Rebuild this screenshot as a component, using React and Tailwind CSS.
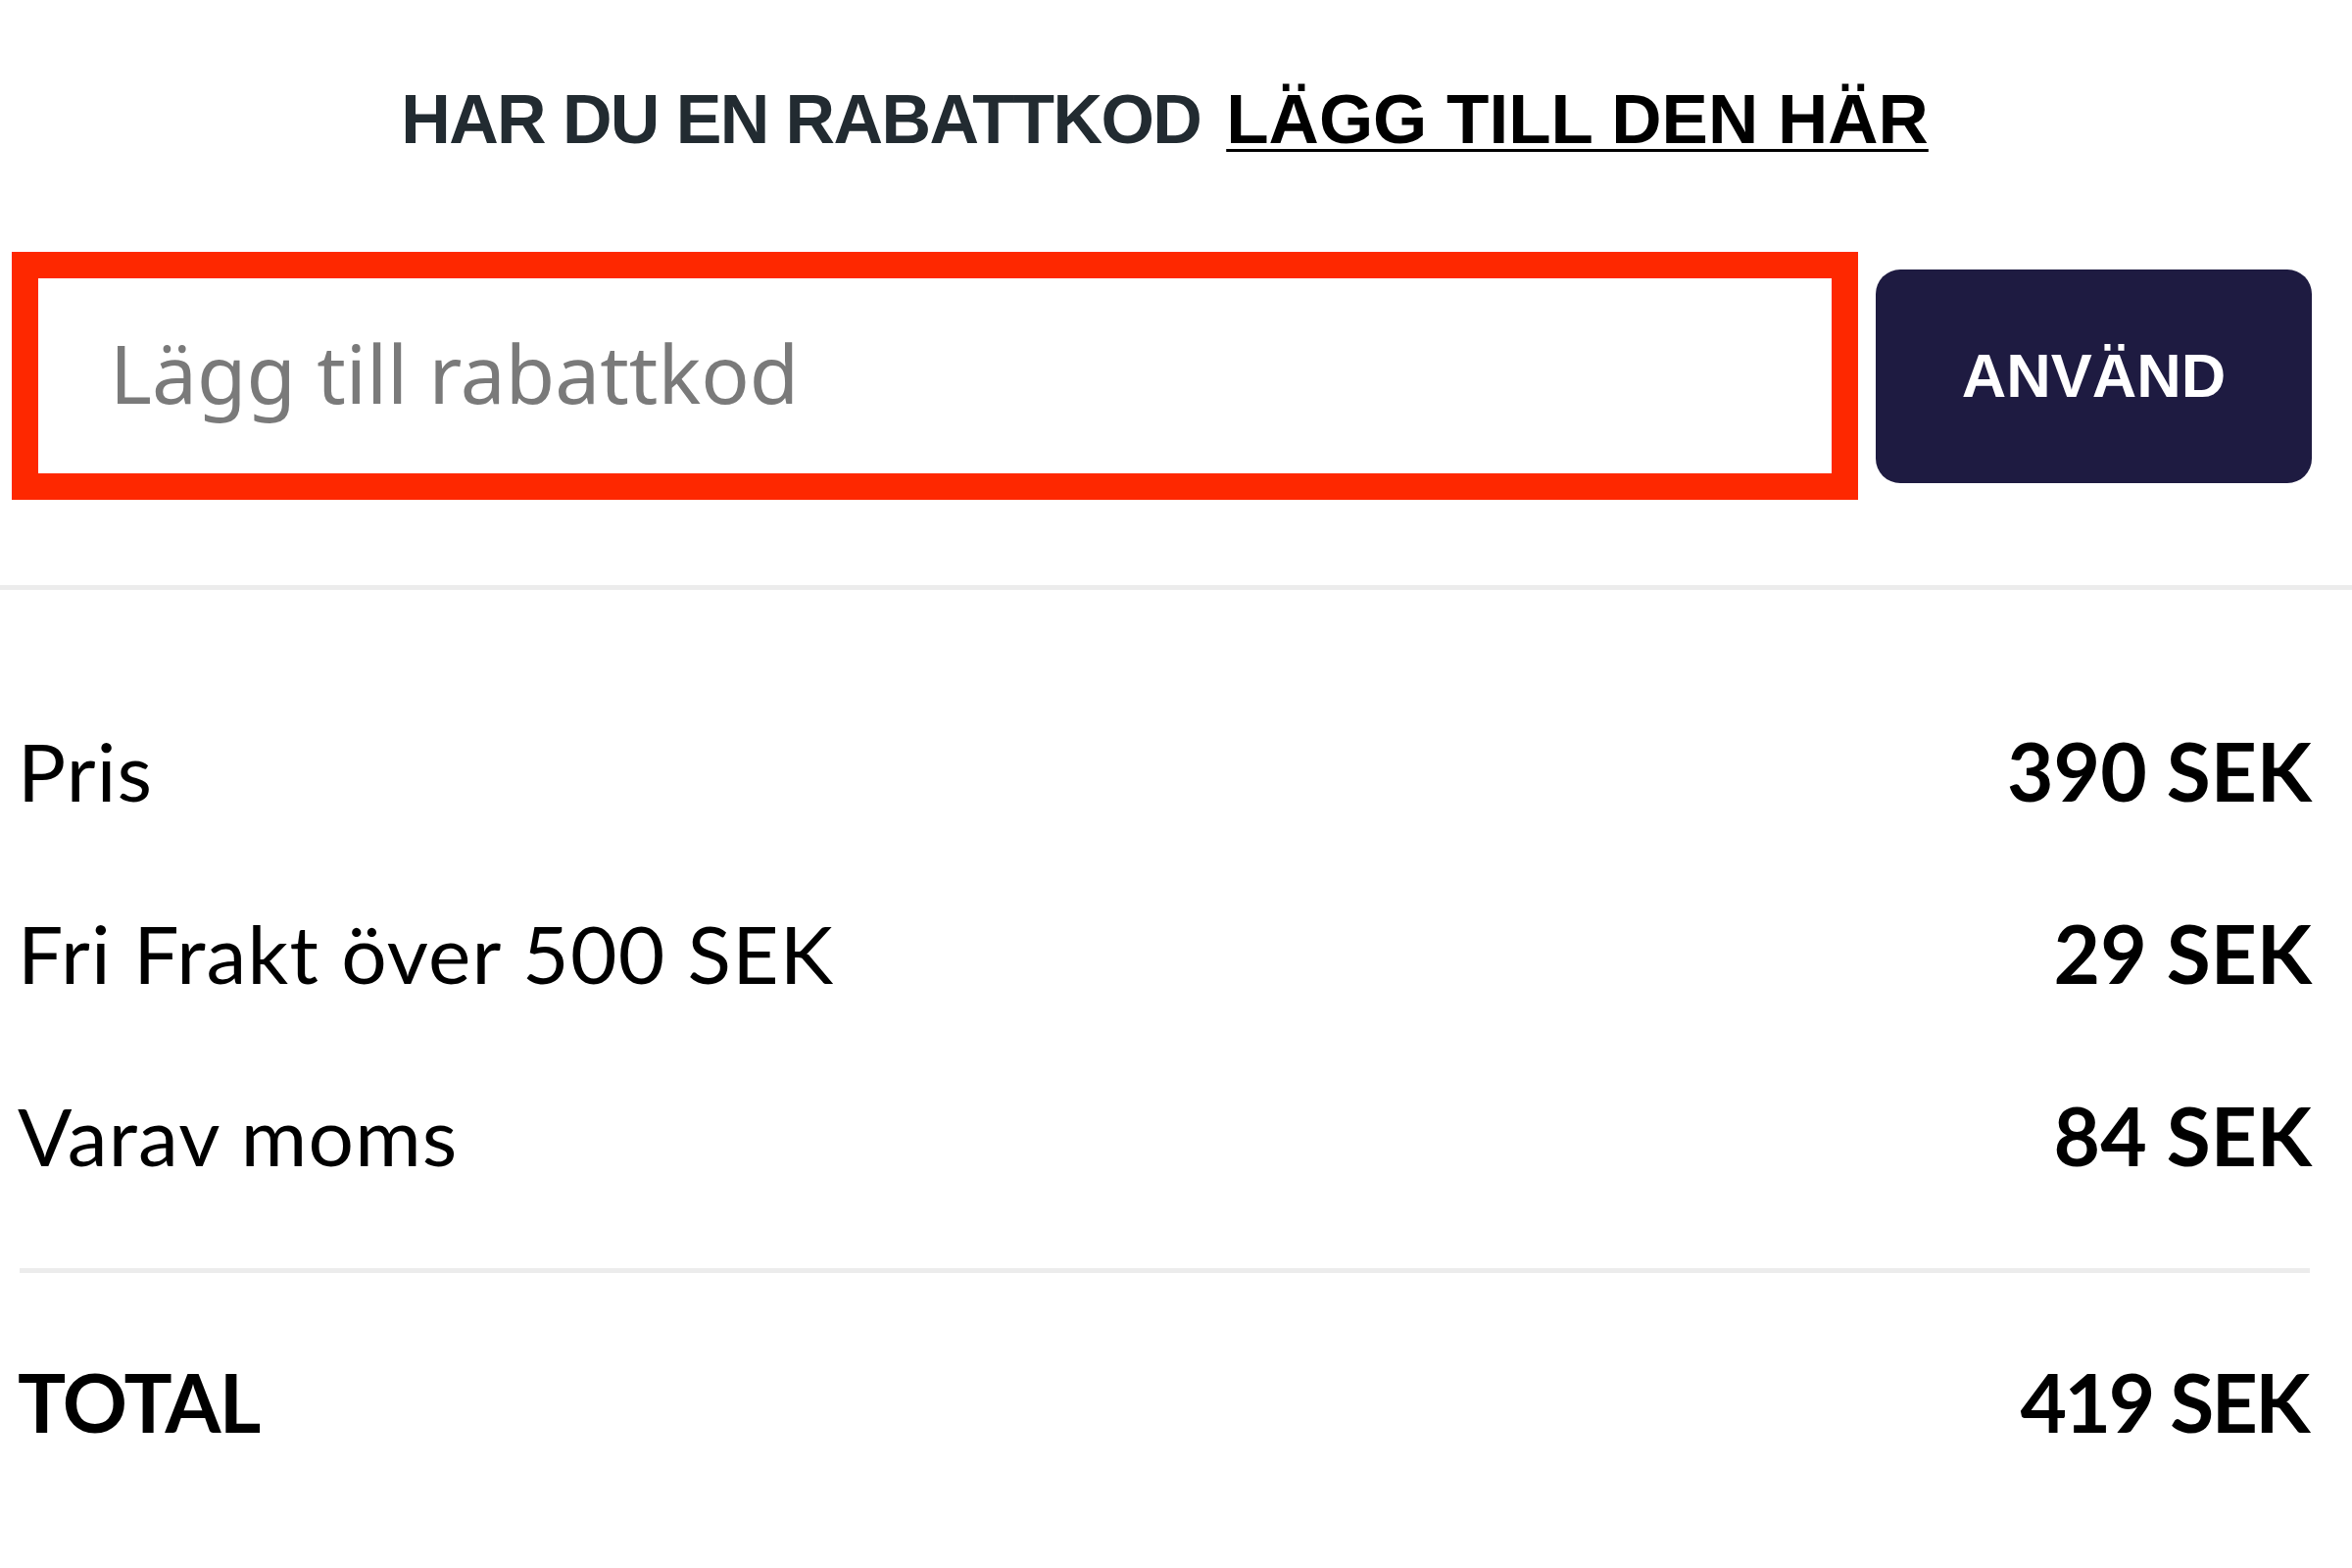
import React from "react";

const rows = [
    { label: "Pris", value: "390 SEK" },
    { label: "Fri Frakt över 500 SEK", value: "29 SEK" },
    { label: "Varav moms", value: "84 SEK" },
];

function DiscountForm() {
    return (
        <div className="flex items-center gap-[18px] pl-[12px] pr-[41px] mt-[96px]">
            <input
                type="text"
                placeholder="Lägg till rabattkod"
                className="flex-1 h-[253px] border-[27px] border-[#fe2800] bg-white pl-[73px] pb-[7px] text-[82px] text-black placeholder:text-[#7a7a7a] outline-none font-['Noto_Sans',sans-serif]"
            />
            <button className="w-[445px] h-[218px] rounded-[25px] bg-[#1e1b41] text-white text-[63px] font-bold font-['Liberation_Sans',Arial,sans-serif] leading-none">
                ANVÄND
            </button>
        </div>
    );
}

function Summary() {
    return (
        <div className="pl-[18px] pr-[41px] pt-[135px] font-['Lato',sans-serif] text-black">
            <div className="flex flex-col gap-[88px]">
                {rows.map((r) => (
                    <div key={r.label} className="flex justify-between text-[82px] leading-[98px]">
                        <span className="tracking-[1.2px]">{r.label}</span>
                        <span className="font-bold">{r.value}</span>
                    </div>
                ))}
            </div>
            <div className="h-[5px] bg-[#ececec] ml-[2px] mr-[2px] mt-[87px]" />
            <div className="flex justify-between text-[82px] leading-[98px] font-bold mt-[82px]">
                <span className="tracking-[-1.5px]">TOTAL</span>
                <span className="tracking-[-2.5px] mr-[4px]">419 SEK</span>
            </div>
        </div>
    );
}

export default function App() {
    return (
        <div className="w-[2400px] h-[1600px] bg-white overflow-hidden">
            <div className="pt-[83px] pl-[18px] pr-[41px] text-center font-['Liberation_Sans',Arial,sans-serif] font-bold text-[70px] leading-[78px]">
                <span className="text-[#222b31] tracking-[-1.6px]">HAR DU EN RABATTKOD</span>
                <a href="#" className="ml-[26px] text-black text-[71px] underline decoration-[3px] underline-offset-[6px]">
                    LÄGG TILL DEN HÄR
                </a>
            </div>
            <DiscountForm />
            <div className="h-[5px] bg-[#ececec] mt-[87px]" />
            <Summary />
        </div>
    );
}
